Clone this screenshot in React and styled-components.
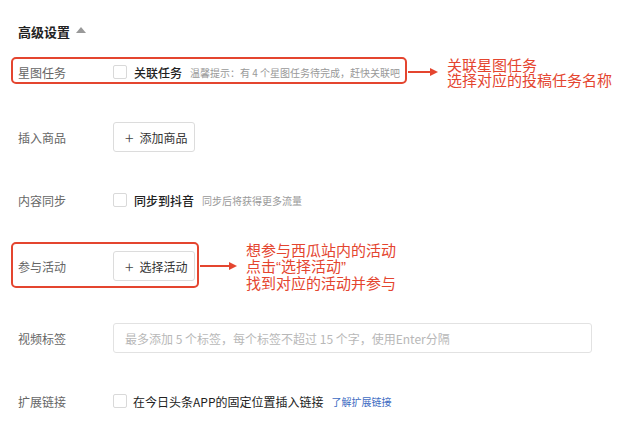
import React from 'react';
import styled, { createGlobalStyle } from 'styled-components';

const GlobalStyle = createGlobalStyle`
  html, body {
    margin: 0;
    padding: 0;
    background: #fff;
  }
  body {
    font-family: "Noto Sans CJK SC", "Noto Sans", "Liberation Sans", sans-serif;
    color: #333;
  }
`;

const Arrow = ({ width }) => (
  <ArrowSvg width={width} height="10" viewBox={`0 0 ${width} 10`}>
    <line x1="0" y1="5" x2={width - 6} y2="5" stroke="#e4452f" strokeWidth="2" />
    <path d={`M${width - 8} 1 L${width} 5 L${width - 8} 9 Z`} fill="#e4452f" />
  </ArrowSvg>
);

const App = () => {
  return (
    <Page>
      <GlobalStyle />
      <Title>
        高级设置 <Caret />
      </Title>

      <Row $mt={17}>
        <Annotated $pad="5px 5px 1px 5px" $m="-7px 0 -3px -7px">
          <Label>星图任务</Label>
          <Check />
          <CheckText>关联任务</CheckText>
          <Hint>温馨提示：有 4 个星图任务待完成，赶快关联吧</Hint>
        </Annotated>
        <Arrow width={30} />
        <Note $lh={15}>
          关联星图任务
          <br />
          选择对应的投稿任务名称
        </Note>
      </Row>

      <Row $mt={35}>
        <Label>插入商品</Label>
        <AddButton>
          <Plus>+</Plus>添加商品
        </AddButton>
      </Row>

      <Row $mt={33}>
        <Label>内容同步</Label>
        <Check />
        <CheckText>同步到抖音</CheckText>
        <Hint>同步后将获得更多流量</Hint>
      </Row>

      <Row $mt={36}>
        <Annotated $pad="7px 2px 5px 5px" $m="-9px 0 -7px -7px">
          <Label>参与活动</Label>
          <AddButton>
            <Plus>+</Plus>选择活动
          </AddButton>
        </Annotated>
        <Arrow width={37} />
        <Note $lh={16}>
          想参与西瓜站内的活动
          <br />
          点击<Quote>“</Quote>选择活动<Quote>”</Quote>
          <br />
          找到对应的活动并参与
        </Note>
      </Row>

      <Row $mt={42}>
        <Label>视频标签</Label>
        <TagInput placeholder="最多添加 5 个标签，每个标签不超过 15 个字，使用Enter分隔" />
      </Row>

      <Row $mt={33}>
        <Label>扩展链接</Label>
        <Check />
        <PlainText>在今日头条APP的固定位置插入链接</PlainText>
        <Link>了解扩展链接</Link>
      </Row>
    </Page>
  );
};

export default App;

const Page = styled.div`
  width: 640px;
  height: 428px;
  box-sizing: border-box;
  padding: 22px 0 0 18px;
  overflow: hidden;
`;

const Title = styled.div`
  display: flex;
  align-items: center;
  height: 18px;
  font-size: 13px;
  font-weight: 700;
  color: #222;
  gap: 6px;
`;

const Caret = styled.span`
  width: 0;
  height: 0;
  border-left: 5px solid transparent;
  border-right: 5px solid transparent;
  border-bottom: 6px solid #999;
  margin-top: -2px;
`;

const Row = styled.div`
  display: flex;
  align-items: center;
  height: 30px;
  margin-top: ${(p) => p.$mt}px;
`;

const Annotated = styled.div`
  display: flex;
  align-items: center;
  border: 2px solid #e4452f;
  border-radius: 5px;
  padding: ${(p) => p.$pad};
  margin: ${(p) => p.$m};
`;

const Label = styled.div`
  width: 95px;
  flex-shrink: 0;
  font-size: 12px;
  color: #666;
`;

const Check = styled.span`
  width: 12px;
  height: 12px;
  border: 1px solid #d9d9d9;
  border-radius: 2px;
  background: #fff;
  flex-shrink: 0;
`;

const CheckText = styled.span`
  margin-left: 7px;
  font-size: 12px;
  font-weight: 500;
  color: #222;
`;

const PlainText = styled.span`
  margin-left: 6px;
  font-size: 12px;
  color: #222;
`;

const Hint = styled.span`
  margin-left: 8px;
  font-size: 10px;
  color: #999;
  white-space: nowrap;
`;

const Link = styled.span`
  margin-left: 8px;
  font-size: 10px;
  color: #3d6bc2;
`;

const AddButton = styled.div`
  display: flex;
  align-items: center;
  box-sizing: border-box;
  width: 82px;
  height: 30px;
  padding-left: 11px;
  border: 1px solid #dcdcdc;
  border-radius: 3px;
  font-size: 12px;
  color: #333;
`;

const Plus = styled.span`
  font-size: 16px;
  font-weight: 300;
  margin-right: 6px;
  line-height: 1;
  color: #444;
`;

const TagInput = styled.input`
  box-sizing: border-box;
  width: 479px;
  height: 30px;
  padding: 0 11px;
  border: 1px solid #e2e2e2;
  border-radius: 3px;
  font-family: inherit;
  font-size: 12px;
  outline: none;
  &::placeholder {
    color: #b8b8b8;
  }
`;

const ArrowSvg = styled.svg`
  margin-left: 1px;
  flex-shrink: 0;
`;

const Note = styled.div`
  margin-left: 9px;
  font-size: 15px;
  line-height: ${(p) => p.$lh}px;
  color: #e4452f;
  white-space: nowrap;
`;

const Quote = styled.span`
  font-family: "Liberation Sans", sans-serif;
`;
